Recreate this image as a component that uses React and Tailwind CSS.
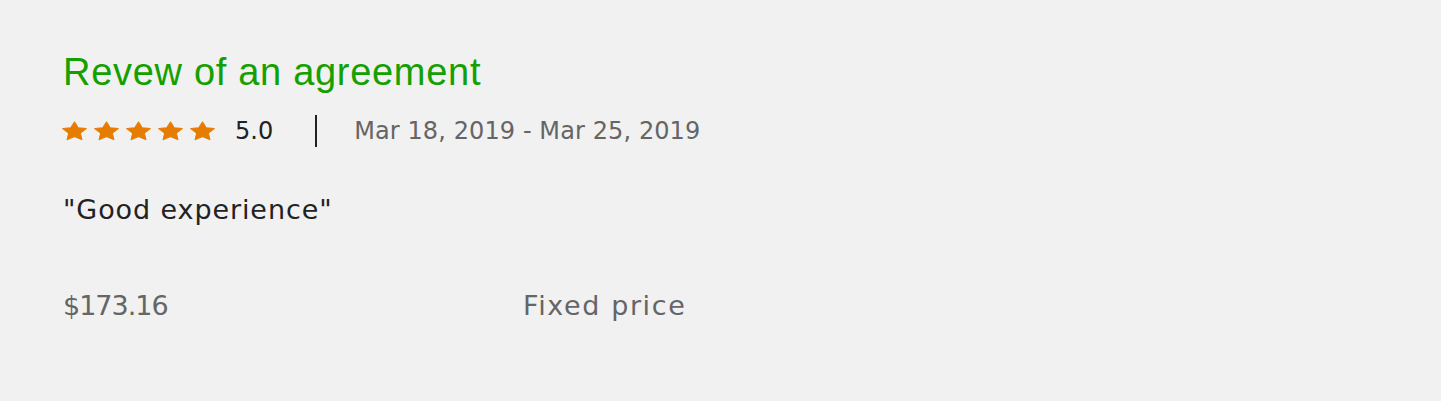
import React from "react";

// star is wider than tall in the picture, so no aspect ratio kept
const Star = () => (
    <svg viewBox="0 0 24 24" preserveAspectRatio="none" className="w-[25px] h-[20px]" aria-hidden="true">
        <path
            d="M12 1.2L15.4 8.1L23.2 9.1L17.5 14.6L19 22.4L12 18.6L5 22.4L6.5 14.6L0.8 9.1L8.6 8.1Z"
            fill="#e67c00"
            stroke="#e67c00"
            strokeWidth="1.2"
            strokeLinejoin="round"
        />
    </svg>
);

const App = () => {
    const title = { fontFamily: '"Liberation Sans", Arial, sans-serif' };
    const body = { fontFamily: '"DejaVu Sans", "Liberation Sans", sans-serif' };

    return (
        <div className="w-[1441px] h-[401px] bg-[#f1f1f1] pl-[63px] pt-[50px]">
            <h2 className="text-[38px] leading-[44px] tracking-[0.7px] text-[#14a000] font-normal" style={title}>
                Revew of an agreement
            </h2>

            <div className="flex items-center h-[32px] mt-[21px]" style={body}>
                <div className="flex items-center gap-[7px] -ml-[1px]">
                    <Star />
                    <Star />
                    <Star />
                    <Star />
                    <Star />
                </div>
                <span className="ml-[20px] text-[24px] leading-[32px] text-[#222]">5.0</span>
                <span className="ml-[42px] w-[2px] h-[32px] bg-[#222]"></span>
                <span className="ml-[37px] text-[24px] leading-[32px] tracking-[0.1px] text-[#656565]">
                    Mar 18, 2019 - Mar 25, 2019
                </span>
            </div>

            <p className="mt-[47px] text-[27px] leading-[32px] tracking-[0.9px] text-[#222]" style={body}>
                "Good experience"
            </p>

            <div className="grid grid-cols-[460px_1fr] mt-[64px] text-[27px] leading-[32px] text-[#656565]" style={body}>
                <span className="-tracking-[1px]">$173.16</span>
                <span className="tracking-[1.6px]">Fixed price</span>
            </div>
        </div>
    );
};

export default App;
